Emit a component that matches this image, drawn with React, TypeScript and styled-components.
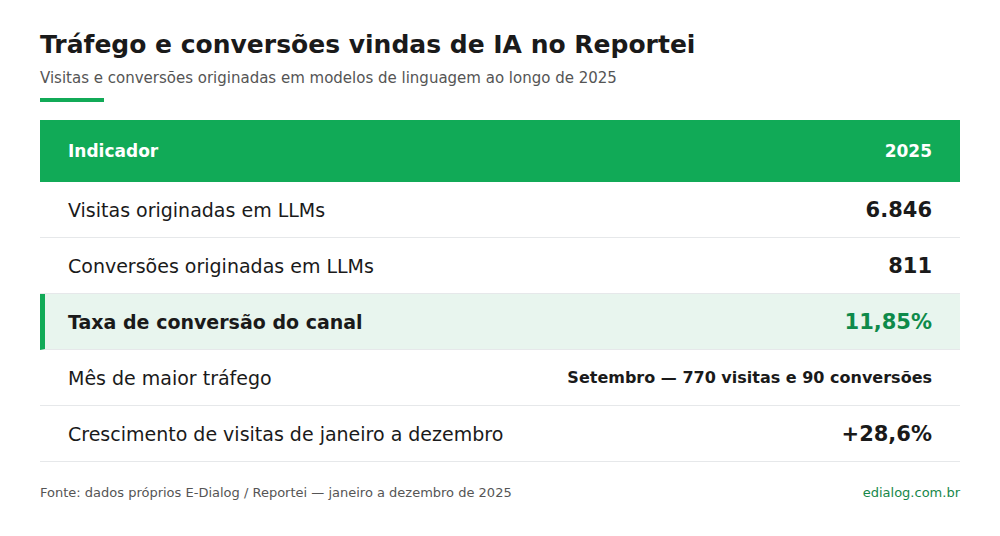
import React from "react";
import styled, { createGlobalStyle } from "styled-components";

const Global = createGlobalStyle`
  html, body { margin: 0; padding: 0; background: #ffffff; }
  body { font-family: "DejaVu Sans", "Liberation Sans", sans-serif; }
`;

const Page = styled.div`
  width: 1000px;
  height: 536px;
  box-sizing: border-box;
  padding: 28px 40px 0;
  display: flex;
  flex-direction: column;
`;

const Title = styled.h1`
  margin: 0;
  font-size: 25px;
  line-height: 34px;
  font-weight: 700;
  color: #1a1a1a;
`;

const Subtitle = styled.p`
  margin: 6px 0 0;
  font-size: 15px;
  line-height: 20px;
  color: #555555;
`;

const Accent = styled.div`
  width: 64px;
  height: 4px;
  background: #11aa57;
  margin-top: 10px;
`;

const Table = styled.div`
  margin-top: 18px;
  display: flex;
  flex-direction: column;
`;

const HeaderRow = styled.div`
  height: 62px;
  background: #11aa57;
  display: flex;
  align-items: center;
  justify-content: space-between;
  padding: 0 28px;
  color: #ffffff;
  font-size: 17px;
  font-weight: 700;
`;

const Row = styled.div<{ $hl?: boolean }>`
  height: 56px;
  box-sizing: border-box;
  display: flex;
  align-items: center;
  justify-content: space-between;
  padding: 0 28px 0 ${(p) => (p.$hl ? "23px" : "28px")};
  border-bottom: 1px solid #e6e8ea;
  background: ${(p) => (p.$hl ? "#e8f5ee" : "#ffffff")};
  border-left: ${(p) => (p.$hl ? "5px solid #11aa57" : "none")};
`;

const Label = styled.span<{ $bold?: boolean }>`
  font-size: 19px;
  font-weight: ${(p) => (p.$bold ? 700 : 400)};
  color: #1a1a1a;
`;

const Value = styled.span<{ $green?: boolean; $small?: boolean }>`
  font-size: ${(p) => (p.$small ? "16px" : "21px")};
  font-weight: 700;
  color: ${(p) => (p.$green ? "#0e8a4a" : "#1a1a1a")};
`;

const Footer = styled.div`
  margin-top: 22px;
  display: flex;
  justify-content: space-between;
  font-size: 13px;
  line-height: 18px;
`;

const Source = styled.span`
  color: #555555;
`;

const Site = styled.span`
  color: #16874a;
`;

const rows = [
  { label: "Visitas originadas em LLMs", value: "6.846" },
  { label: "Conversões originadas em LLMs", value: "811" },
  { label: "Taxa de conversão do canal", value: "11,85%", hl: true },
  { label: "Mês de maior tráfego", value: "Setembro — 770 visitas e 90 conversões", small: true },
  { label: "Crescimento de visitas de janeiro a dezembro", value: "+28,6%" },
];

export default function App() {
  return (
    <>
      <Global />
      <Page>
        <Title>Tráfego e conversões vindas de IA no Reportei</Title>
        <Subtitle>Visitas e conversões originadas em modelos de linguagem ao longo de 2025</Subtitle>
        <Accent />
        <Table>
          <HeaderRow>
            <span>Indicador</span>
            <span>2025</span>
          </HeaderRow>
          {rows.map((r) => (
            <Row key={r.label} $hl={r.hl}>
              <Label $bold={r.hl}>{r.label}</Label>
              <Value $green={r.hl} $small={r.small}>
                {r.value}
              </Value>
            </Row>
          ))}
        </Table>
        <Footer>
          <Source>Fonte: dados próprios E-Dialog / Reportei — janeiro a dezembro de 2025</Source>
          <Site>edialog.com.br</Site>
        </Footer>
      </Page>
    </>
  );
}
